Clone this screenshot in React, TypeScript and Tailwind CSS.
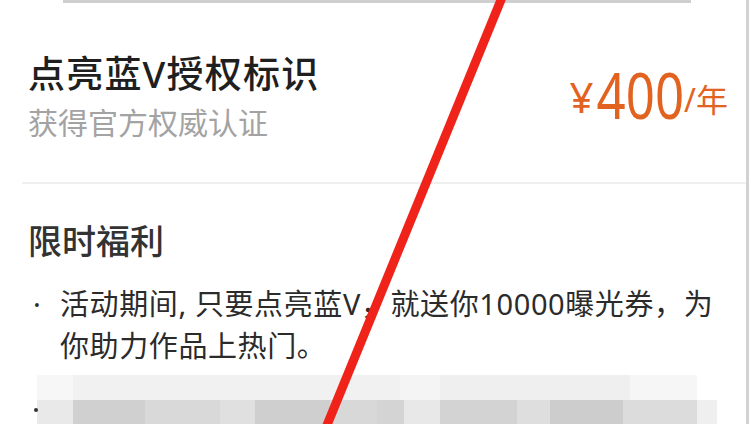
const font = { fontFamily: '"Noto Sans", "Noto Sans CJK SC", sans-serif' };

const upperBand = [
  'w-[36px] bg-[#f7f7f7]',
  'w-[327px] bg-[#f1f1f1]',
  'w-[40px] bg-[#f4f4f4]',
  'w-[190px] bg-[#efefef]',
  'w-[67px] bg-[#f6f6f6]',
];

const lowerBand = [
  'w-[36px] bg-[#e9e9e9]',
  'w-[72px] bg-[#d0d0d0]',
  'w-[75px] bg-[#d9d9d9]',
  'w-[35px] bg-[#e0e0e0]',
  'w-[75px] bg-[#cfcfcf]',
  'w-[47px] bg-[#d8d8d8]',
  'w-[27px] bg-[#d4d4d4]',
  'w-[36px] bg-[#e8e8e8]',
  'w-[77px] bg-[#d3d3d3]',
  'w-[33px] bg-[#dedede]',
  'w-[73px] bg-[#cdcdcd]',
  'w-[74px] bg-[#dcdcdc]',
  'w-[20px] bg-[#efefef]',
];

export default function App() {
  return (
    <div className="relative w-[754px] h-[424px] overflow-hidden bg-white" style={font}>
      <div className="w-[749px] h-full border-r-[3px] border-[#d2d2d2] bg-white">
        {/* bottom edge of the card above */}
        <div className="ml-[63px] w-[628px] h-[3px] bg-[#cfcfcf]" />

        <div className="flex items-start justify-between h-[179px] pl-[28px] pr-[18px]">
          <div className="pt-[49px]">
            <div className="text-[37px] leading-[44px] tracking-[1.2px] font-medium text-[#1f1f1f]">点亮蓝V授权标识</div>
            <div className="mt-[9px] text-[30px] leading-[36px] text-[#a3a3a3]">获得官方权威认证</div>
          </div>
          <div className="mt-[66px] flex items-center text-[#e2621f]">
            <span className="text-[42px] leading-none translate-y-[2px]">¥</span>
            <span className="ml-[3px] inline-block text-[51px] leading-none scale-y-[1.26]">400</span>
            <span className="text-[32px] leading-none translate-y-[5px]">/年</span>
          </div>
        </div>

        <div className="ml-[22px] h-[2px] bg-[#f0f0f0]" />

        <div className="pl-[28px] pr-[20px]">
          <div className="mt-[37px] text-[34px] leading-[40px] font-medium text-[#333]">限时福利</div>
          <div className="mt-[22px] flex text-[29px] leading-[42px] tracking-[0.6px] text-[#2b2b2b]">
            <span className="w-[32px] shrink-0 pl-[5px]">·</span>
            <p>
              活动期间, 只要点亮蓝V，就送你10000曝光券，为
              <br />
              你助力作品上热门。
            </p>
          </div>

          <div className="mt-[8px] ml-[9px]">
            <div className="flex h-[25px]">
              {upperBand.map((c, i) => (
                <div key={i} className={c} />
              ))}
            </div>
            <div className="flex h-[24px] items-center">
              {lowerBand.map((c, i) => (
                <div key={i} className={`h-full ${c}`} />
              ))}
            </div>
          </div>
        </div>
      </div>

      {/* second bullet over the mosaic */}
      <div className="absolute left-[34px] top-[408px] w-[4px] h-[4px] rounded-full bg-[#333]" />

      {/* red annotation stroke */}
      <svg className="absolute inset-0 pointer-events-none" width="754" height="424" viewBox="0 0 754 424">
        <line x1="503" y1="-5" x2="325" y2="430" stroke="#f0231a" strokeWidth="9" />
      </svg>
    </div>
  );
}
